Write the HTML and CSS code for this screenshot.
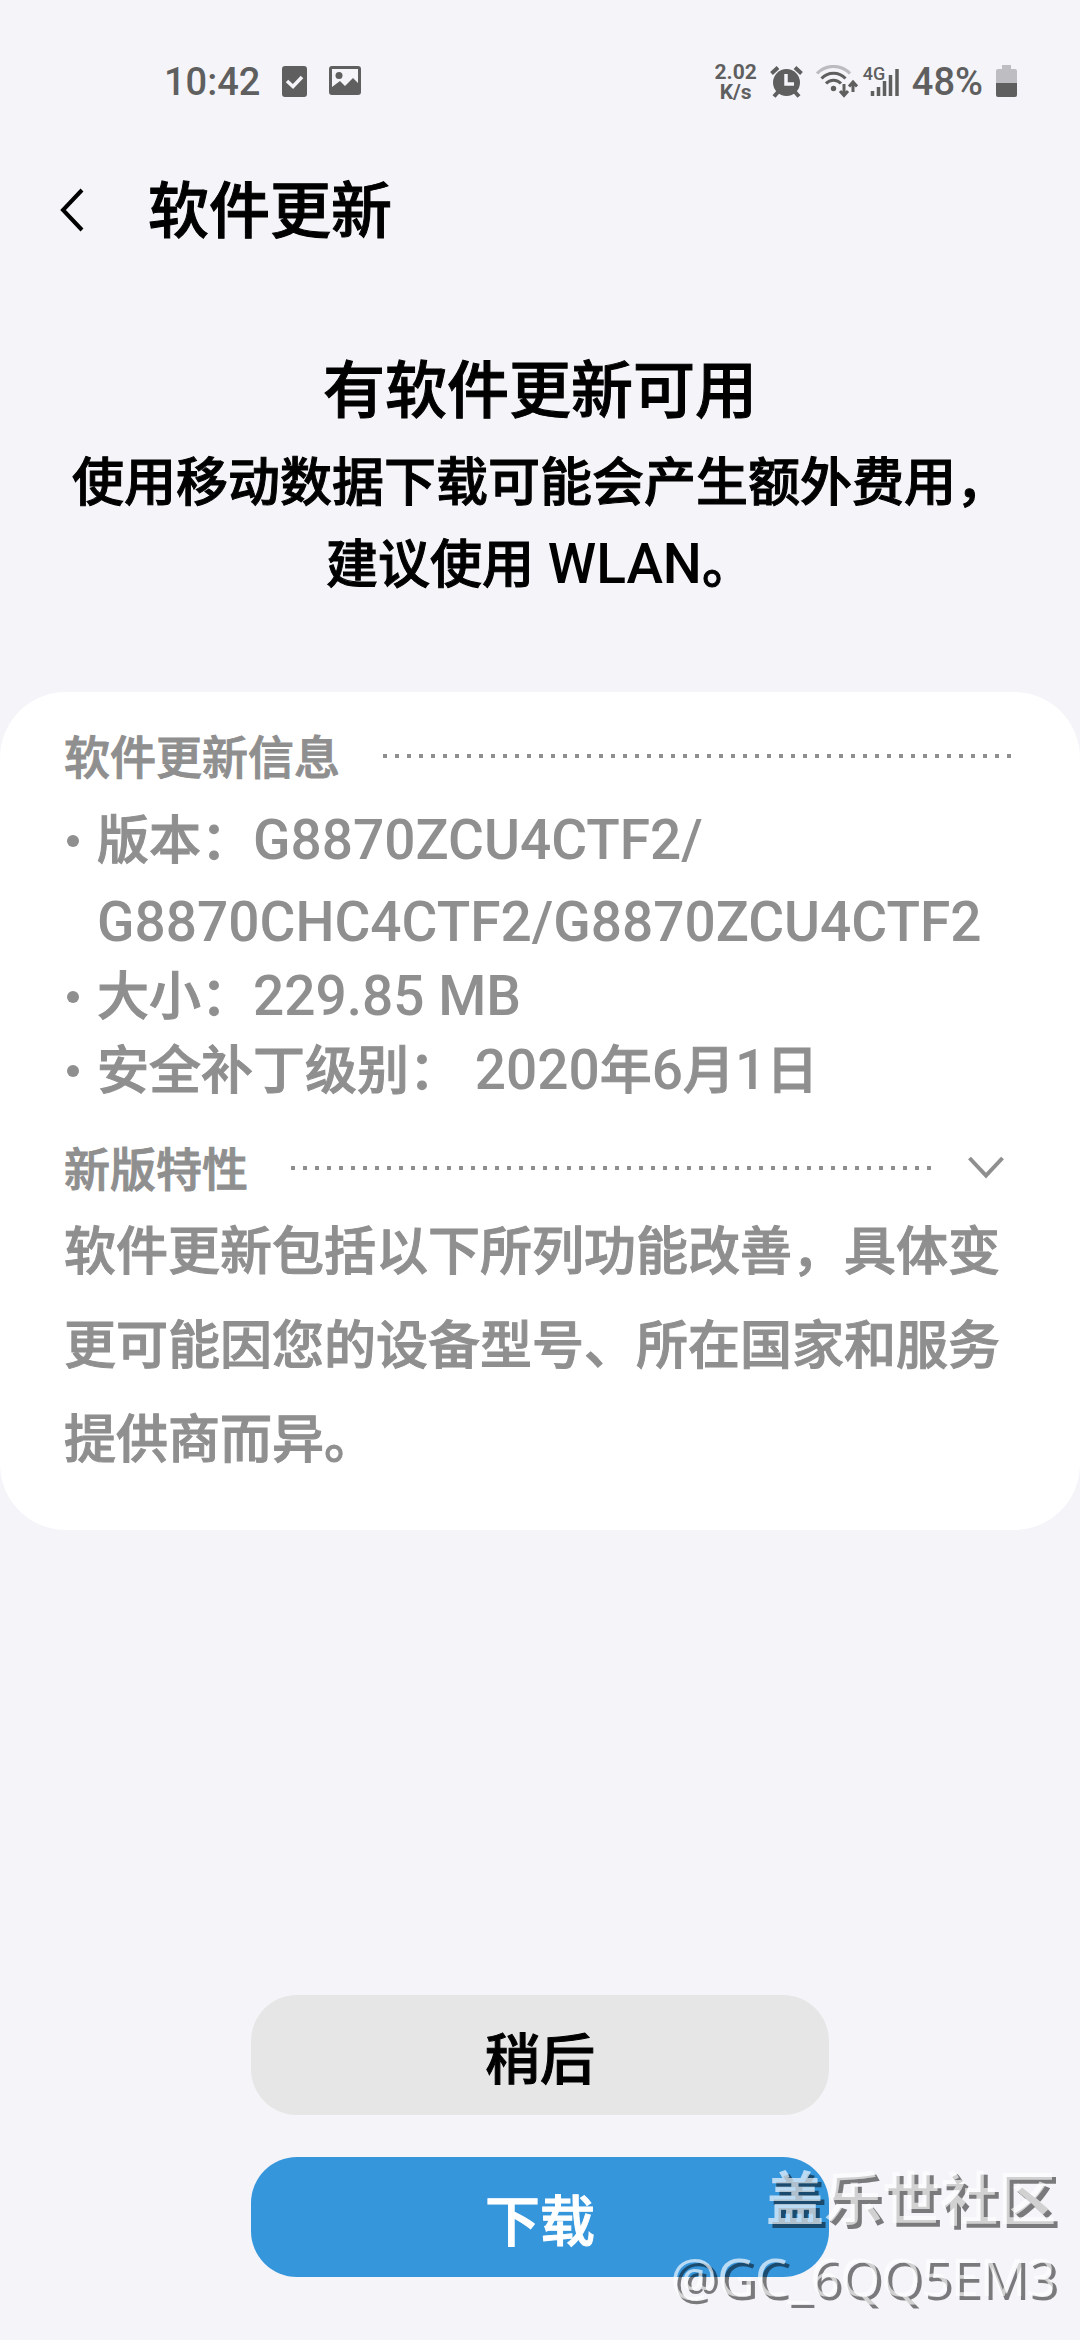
FILE: index.html
```
<!DOCTYPE html>
<html lang="zh-CN">
<head>
<meta charset="utf-8">
<meta name="viewport" content="width=device-width, initial-scale=1">
<title>软件更新</title>
<link rel="stylesheet" href="styles.css">
</head>
<body>
<div class="status-bar">
  <div class="status-group">
    <time class="clock">10:42</time>
    <svg class="status-icon" width="25" height="34" viewBox="0 0 25 34" aria-hidden="true">
      <rect x="0" y="1" width="25" height="31" rx="3" fill="#5f5f5f"/>
      <path d="M5 16l6 5.500L20 12" fill="none" stroke="#f4f4f9" stroke-width="3.500"/>
    </svg>
    <svg class="status-icon" width="32" height="34" viewBox="0 0 32 34" aria-hidden="true">
      <path fill-rule="evenodd" fill="#5f5f5f" d="M3 1h26a3 3 0 0 1 3 3v23a3 3 0 0 1-3 3H3a3 3 0 0 1-3-3V4a3 3 0 0 1 3-3zm0 3v18l8-6 5 5 8-8 5 5V4z"/>
      <circle cx="10" cy="10.500" r="3.500" fill="#5f5f5f"/>
    </svg>
  </div>
  <div class="status-group">
    <div class="speed"><span>2.02</span><span>K/s</span></div>
    <svg class="status-icon" width="33" height="34" viewBox="0 0 33 34" aria-hidden="true">
      <g fill="none" stroke="#5f5f5f" stroke-width="4">
        <path d="M1.500 8.500L8 2.500M31.500 8.500L25 2.500"/>
        <path d="M8 27l-4 4.500M25 27l4 4.500"/>
      </g>
      <circle cx="16.500" cy="17.500" r="13.500" fill="#5f5f5f"/>
      <path d="M16 9v10h8" fill="none" stroke="#f4f4f9" stroke-width="3.500"/>
    </svg>
    <svg class="status-icon" width="42" height="34" viewBox="0 0 42 34" aria-hidden="true">
      <g fill="none" stroke-width="3">
        <path d="M1 8.500C10-1 25-1 34 8.500" stroke="#bcbcc0"/>
        <path d="M5.500 13.500C12 6.500 23 6.500 29.500 13.500M10 18.500C14 14 21 14 25 18.500" stroke="#5f5f5f"/>
        <path d="M28 19v11M24 26l4 4.500 4-4.500M37 27V18M33 21.500l4-4.500 4 4.500" stroke="#5f5f5f"/>
      </g>
      <circle cx="17.500" cy="23.500" r="2.700" fill="#5f5f5f"/>
    </svg>
    <div class="signal">
      <svg width="36" height="34" viewBox="0 0 36 34" aria-hidden="true">
        <path d="M9.500 31v-5M15.500 31v-9M21.500 31V16M27.500 31V10M34 31V4" fill="none" stroke="#5f5f5f" stroke-width="3.500"/>
      </svg>
      <span class="network">4G</span>
    </div>
    <span class="clock">48%</span>
    <svg class="status-icon" width="21" height="34" viewBox="0 0 21 34" aria-hidden="true">
      <path d="M6 0h9v4h4a2 2 0 0 1 2 2v12H0V6a2 2 0 0 1 2-2h4z" fill="#bebec2"/>
      <path d="M0 18h21v12a2 2 0 0 1-2 2H2a2 2 0 0 1-2-2z" fill="#5f5f5f"/>
    </svg>
  </div>
</div>

<header class="app-bar">
  <button class="back" type="button" aria-label="返回">
    <svg width="24" height="44" viewBox="0 0 24 44" aria-hidden="true"><path d="M22 2L3 22l19 20" fill="none" stroke="#000" stroke-width="4"/></svg>
  </button>
  <h1 class="app-title">软件更新</h1>
</header>

<main class="content">
  <section class="notice">
    <h2 class="notice-title">有软件更新可用</h2>
    <p class="notice-text">使用移动数据下载可能会产生额外费用，<br>建议使用<span class="latin"> WLAN</span>。</p>
  </section>

  <section class="card">
    <div class="section-head">
      <h3 class="section-title">软件更新信息</h3>
      <span class="dots"></span>
    </div>
    <ul class="details">
      <li>版本：<span class="latin">G8870ZCU4CTF2/<wbr>G8870CHC4CTF2/G8870ZCU4CTF2</span></li>
      <li>大小：<span class="latin">229.85 MB</span></li>
      <li>安全补丁级别：<span class="latin"> 2020</span>年<span class="latin">6</span>月<span class="latin">1</span>日</li>
    </ul>
    <div class="section-head">
      <h3 class="section-title">新版特性</h3>
      <span class="dots"></span>
      <button class="toggle" type="button" aria-label="展开">
        <svg width="36" height="24" viewBox="0 0 36 24" aria-hidden="true"><path d="M1.500 2L18 19.500 34.500 2" fill="none" stroke="#8f8f8f" stroke-width="4"/></svg>
      </button>
    </div>
    <p class="features">软件更新包括以下所列功能改善，具体变更可能因您的设备型号、所在国家和服务提供商而异。</p>
  </section>
</main>

<footer class="actions">
  <button class="action" type="button">稍后</button>
  <button class="action action-primary" type="button">下载</button>
</footer>

<div class="watermark">
  <span class="watermark-site">盖乐世社区</span>
  <span class="watermark-user">@GC_6QQ5EM3</span>
</div>
</body>
</html>
```
FILE: styles.css
```
* {
  box-sizing: border-box;
}

body {
  position: relative;
  display: flex;
  flex-direction: column;
  min-height: 100vh;
  margin: 0;
  background: #f4f4f9;
  color: #000;
  font-family: Roboto, "Noto Sans CJK SC", sans-serif;
  font-weight: 500;
}

h1, h2, h3, p, ul {
  margin: 0;
  padding: 0;
  font-weight: 500;
}

button {
  padding: 0;
  border: 0;
  background: none;
  color: inherit;
  font: inherit;
}

svg {
  display: block;
}

/* The Chinese face has no medium weight; a thin outline fills it in */
.app-title,
.notice,
.card,
.action {
  -webkit-text-stroke: 1px;
}

/* Status bar */
.status-bar {
  display: flex;
  align-items: center;
  justify-content: space-between;
  padding: 60px 63px 0 164px;
  color: #5f5f5f;
}

.status-group {
  display: flex;
  align-items: center;
  gap: 13px;
}

.status-group:first-child {
  gap: 22px;
}

.clock {
  font-size: 38px;
  line-height: 44px;
}

.speed {
  display: flex;
  flex-direction: column;
  align-items: center;
  font-size: 21px;
  font-weight: 700;
  line-height: 20px;
}

.signal {
  position: relative;
  margin-left: -8px;
}

.network {
  position: absolute;
  top: 0;
  left: 0;
  font-size: 18px;
  line-height: 18px;
}

/* App bar */
.app-bar {
  display: flex;
  align-items: center;
  gap: 64px;
  padding: 60px 60px 0;
}

.app-title {
  padding-top: 4px;
  font-size: 61px;
  line-height: 88px;
}

/* Update notice */
.notice {
  padding: 88px 64px 0;
  text-align: center;
}

.notice-title {
  font-size: 62px;
  line-height: 96px;
}

.notice-text {
  padding-top: 4px;
  font-size: 52px;
  line-height: 80px;
}

.latin {
  font-size: 55px;
  -webkit-text-stroke: 0;
}

/* Details card */
.card {
  margin-top: 86px;
  padding: 30px 64px 42px;
  border-radius: 66px;
  background: #fff;
  color: #8f8f8f;
}

.section-head {
  display: flex;
  align-items: center;
  gap: 43px;
}

.section-title {
  padding-top: 4px;
  font-size: 46px;
  line-height: 64px;
}

.dots {
  flex: 1;
  height: 4px;
  background: repeating-linear-gradient(to right, #8f8f8f 0 4px, transparent 4px 12px);
}

.toggle {
  margin: 0 12px 0 -8px;
}

.details {
  padding: 10px 0 22px;
  font-size: 52px;
  line-height: 81px;
  list-style: none;
}

.details li {
  position: relative;
  padding-left: 33px;
}

.details li + li {
  margin-top: -8px;
}

.details li::before {
  content: "";
  position: absolute;
  top: 35px;
  left: 3px;
  width: 12px;
  height: 12px;
  border-radius: 50%;
  background: #8f8f8f;
}

.features {
  padding-top: 4px;
  font-size: 52px;
  line-height: 94px;
}

/* Bottom actions */
.actions {
  display: flex;
  flex-direction: column;
  align-items: center;
  gap: 42px;
  margin-top: auto;
  padding: 60px 0 63px;
}

.action {
  width: 578px;
  max-width: 90%;
  height: 120px;
  border-radius: 46px;
  background: #e6e6e6;
  font-size: 55px;
}

.action-primary {
  background: #3596dc;
  color: #fff;
}

/* Watermark over the page corner */
.watermark {
  position: absolute;
  right: 24px;
  bottom: 26px;
  display: flex;
  flex-direction: column;
  align-items: flex-end;
  color: rgba(255, 255, 255, 0.66);
  text-shadow: 4px 4px 0 rgba(0, 0, 0, 0.5);
  pointer-events: none;
}

.watermark-site {
  font-size: 58px;
  font-weight: 700;
  line-height: 76px;
}

.watermark-user {
  font-family: "Open Sans", sans-serif;
  font-size: 52px;
  font-weight: 400;
  line-height: 76px;
}
```
